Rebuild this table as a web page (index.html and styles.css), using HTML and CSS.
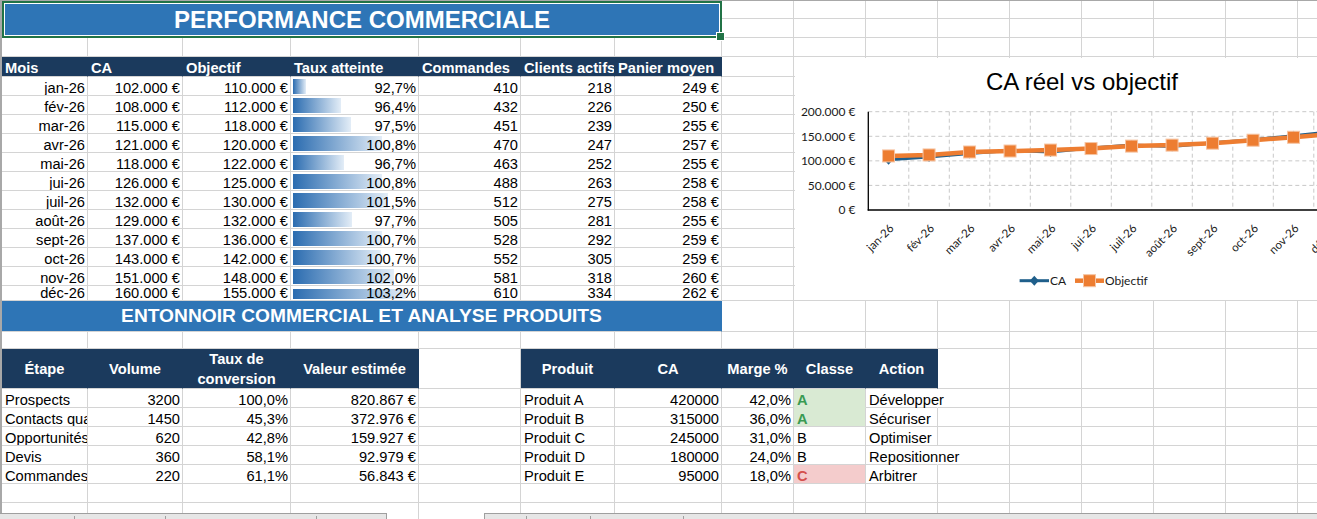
FILE: index.html
```html
<!DOCTYPE html>
<html lang="fr">
<head>
<meta charset="utf-8">
<title>Performance commerciale</title>
<link rel="stylesheet" href="styles.css">
</head>
<body>
<div class="sheet">
  <div class="grid">
    <div class="title">PERFORMANCE COMMERCIALE</div>
    <i class="rest"></i>
    <i class="rest"></i>
    <i></i><i></i><i></i><i></i><i></i><i></i><i></i><i class="rest"></i>

    <div class="hd">Mois</div><div class="hd">CA</div><div class="hd">Objectif</div><div class="hd">Taux atteinte</div><div class="hd">Commandes</div><div class="hd">Clients actifs</div><div class="hd">Panier moyen</div><i class="rest"></i>

    <div class="r">jan-26</div><div class="r">102.000 €</div><div class="r">110.000 €</div><div class="r bar" style="--w:13px">92,7%</div><div class="r">410</div><div class="r">218</div><div class="r">249 €</div><i class="rest"></i>
    <div class="r">fév-26</div><div class="r">108.000 €</div><div class="r">112.000 €</div><div class="r bar" style="--w:48px">96,4%</div><div class="r">432</div><div class="r">226</div><div class="r">250 €</div><i class="rest"></i>
    <div class="r">mar-26</div><div class="r">115.000 €</div><div class="r">118.000 €</div><div class="r bar" style="--w:58px">97,5%</div><div class="r">451</div><div class="r">239</div><div class="r">255 €</div><i class="rest"></i>
    <div class="r">avr-26</div><div class="r">121.000 €</div><div class="r">120.000 €</div><div class="r bar" style="--w:89px">100,8%</div><div class="r">470</div><div class="r">247</div><div class="r">257 €</div><i class="rest"></i>
    <div class="r">mai-26</div><div class="r">118.000 €</div><div class="r">122.000 €</div><div class="r bar" style="--w:51px">96,7%</div><div class="r">463</div><div class="r">252</div><div class="r">255 €</div><i class="rest"></i>
    <div class="r">jui-26</div><div class="r">126.000 €</div><div class="r">125.000 €</div><div class="r bar" style="--w:89px">100,8%</div><div class="r">488</div><div class="r">263</div><div class="r">258 €</div><i class="rest"></i>
    <div class="r">juil-26</div><div class="r">132.000 €</div><div class="r">130.000 €</div><div class="r bar" style="--w:95px">101,5%</div><div class="r">512</div><div class="r">275</div><div class="r">258 €</div><i class="rest"></i>
    <div class="r">août-26</div><div class="r">129.000 €</div><div class="r">132.000 €</div><div class="r bar" style="--w:59px">97,7%</div><div class="r">505</div><div class="r">281</div><div class="r">255 €</div><i class="rest"></i>
    <div class="r">sept-26</div><div class="r">137.000 €</div><div class="r">136.000 €</div><div class="r bar" style="--w:89px">100,7%</div><div class="r">528</div><div class="r">292</div><div class="r">259 €</div><i class="rest"></i>
    <div class="r">oct-26</div><div class="r">143.000 €</div><div class="r">142.000 €</div><div class="r bar" style="--w:88px">100,7%</div><div class="r">552</div><div class="r">305</div><div class="r">259 €</div><i class="rest"></i>
    <div class="r">nov-26</div><div class="r">151.000 €</div><div class="r">148.000 €</div><div class="r bar" style="--w:101px">102,0%</div><div class="r">581</div><div class="r">318</div><div class="r">260 €</div><i class="rest"></i>
    <div class="r s">déc-26</div><div class="r s">160.000 €</div><div class="r s">155.000 €</div><div class="r s bar" style="--w:113px">103,2%</div><div class="r s">610</div><div class="r s">334</div><div class="r s">262 €</div><i class="rest"></i>

    <div class="banner">ENTONNOIR COMMERCIAL ET ANALYSE PRODUITS</div><i class="rest"></i>
    <i></i><i></i><i></i><i></i><i></i><i></i><i></i><i class="rest"></i>

    <div class="fh">Étape</div><div class="fh">Volume</div><div class="fh">Taux de<br>conversion</div><div class="fh">Valeur estimée</div><i></i>
    <div class="fh">Produit</div><div class="fh">CA</div><div class="fh">Marge %</div><div class="fh">Classe</div><div class="fh">Action</div><i class="rest2"></i>

    <div>Prospects</div><div class="r">3200</div><div class="r">100,0%</div><div class="r">820.867 €</div><i></i>
    <div>Produit A</div><div class="r">420000</div><div class="r">42,0%</div><div class="ga top">A</div><div class="ov">Développer</div><i class="rest2"></i>

    <div>Contacts qualifiés</div><div class="r">1450</div><div class="r">45,3%</div><div class="r">372.976 €</div><i></i>
    <div>Produit B</div><div class="r">315000</div><div class="r">36,0%</div><div class="ga">A</div><div>Sécuriser</div><i class="rest2"></i>

    <div>Opportunités</div><div class="r">620</div><div class="r">42,8%</div><div class="r">159.927 €</div><i></i>
    <div>Produit C</div><div class="r">245000</div><div class="r">31,0%</div><div>B</div><div>Optimiser</div><i class="rest2"></i>

    <div>Devis</div><div class="r">360</div><div class="r">58,1%</div><div class="r">92.979 €</div><i></i>
    <div>Produit D</div><div class="r">180000</div><div class="r">24,0%</div><div>B</div><div class="ov">Repositionner</div><i class="rest2"></i>

    <div>Commandes</div><div class="r">220</div><div class="r">61,1%</div><div class="r">56.843 €</div><i></i>
    <div>Produit E</div><div class="r">95000</div><div class="r">18,0%</div><div class="rc">C</div><div>Arbitrer</div><i class="rest2"></i>

    <i></i><i></i><i></i><i></i><i></i><i></i><i></i><i class="rest"></i>
    <i></i><i></i><i></i><i></i><i></i><i></i><i></i><i class="rest"></i>
  </div>

  <div class="chart">
    <svg width="600" height="242" viewBox="1 1 600 242">
      <defs>
        <path id="dm" d="M0,-5 L4.5,0 L0,5 L-4.5,0 Z"/>
        <rect id="sq" x="-6" y="-6" width="12" height="12"/>
      </defs>
      <text class="ct" x="288" y="33" text-anchor="middle">CA réel vs objectif</text>
      <g class="gl">
        <line x1="74.3" y1="54.7" x2="600" y2="54.7"/>
        <line x1="74.3" y1="79.3" x2="600" y2="79.3"/>
        <line x1="74.3" y1="103.85" x2="600" y2="103.85"/>
        <line x1="74.3" y1="128.4" x2="600" y2="128.4"/>
        <line x1="114.8" y1="54.7" x2="114.8" y2="153"/>
        <line x1="155.3" y1="54.7" x2="155.3" y2="153"/>
        <line x1="195.8" y1="54.7" x2="195.8" y2="153"/>
        <line x1="236.3" y1="54.7" x2="236.3" y2="153"/>
        <line x1="276.8" y1="54.7" x2="276.8" y2="153"/>
        <line x1="317.3" y1="54.7" x2="317.3" y2="153"/>
        <line x1="357.8" y1="54.7" x2="357.8" y2="153"/>
        <line x1="398.3" y1="54.7" x2="398.3" y2="153"/>
        <line x1="438.8" y1="54.7" x2="438.8" y2="153"/>
        <line x1="479.3" y1="54.7" x2="479.3" y2="153"/>
        <line x1="519.8" y1="54.7" x2="519.8" y2="153"/>
        <line x1="560.3" y1="54.7" x2="560.3" y2="153"/>
      </g>
      <line class="ax" x1="74.3" y1="54.7" x2="74.3" y2="153.6"/>
      <line class="ax" x1="73.7" y1="153" x2="600" y2="153"/>
      <g class="lbl" text-anchor="end">
        <text x="61.5" y="58.9">200.000 €</text>
        <text x="61.5" y="83.5">150.000 €</text>
        <text x="61.5" y="108">100.000 €</text>
        <text x="61.5" y="132.6">50.000 €</text>
        <text x="61.5" y="157.2">0 €</text>
      </g>
      <polyline class="ca" points="94.55,102.87 135.05,99.92 175.55,96.48 216.05,93.53 256.55,95 297.05,91.07 337.55,88.12 378.05,89.6 418.55,85.66 459.05,82.72 499.55,78.78 540.05,74.36"/>
      <g class="cam">
        <use href="#dm" x="94.55" y="102.87"/><use href="#dm" x="135.05" y="99.92"/><use href="#dm" x="175.55" y="96.48"/><use href="#dm" x="216.05" y="93.53"/><use href="#dm" x="256.55" y="95"/><use href="#dm" x="297.05" y="91.07"/><use href="#dm" x="337.55" y="88.12"/><use href="#dm" x="378.05" y="89.6"/><use href="#dm" x="418.55" y="85.66"/><use href="#dm" x="459.05" y="82.72"/><use href="#dm" x="499.55" y="78.78"/><use href="#dm" x="540.05" y="74.36"/>
      </g>
      <polyline class="ob" points="94.55,98.93 135.05,97.95 175.55,95 216.05,94.02 256.55,93.04 297.05,91.56 337.55,89.1 378.05,88.12 418.55,86.16 459.05,83.21 499.55,80.26 540.05,76.82"/>
      <g class="obm">
        <use href="#sq" x="94.55" y="98.93"/><use href="#sq" x="135.05" y="97.95"/><use href="#sq" x="175.55" y="95"/><use href="#sq" x="216.05" y="94.02"/><use href="#sq" x="256.55" y="93.04"/><use href="#sq" x="297.05" y="91.56"/><use href="#sq" x="337.55" y="89.1"/><use href="#sq" x="378.05" y="88.12"/><use href="#sq" x="418.55" y="86.16"/><use href="#sq" x="459.05" y="83.21"/><use href="#sq" x="499.55" y="80.26"/><use href="#sq" x="540.05" y="76.82"/>
      </g>
      <g class="lbl xl" text-anchor="end">
        <text transform="translate(100.55 172) rotate(-45)">jan-26</text>
        <text transform="translate(141.05 172) rotate(-45)">fév-26</text>
        <text transform="translate(181.55 172) rotate(-45)">mar-26</text>
        <text transform="translate(222.05 172) rotate(-45)">avr-26</text>
        <text transform="translate(262.55 172) rotate(-45)">mai-26</text>
        <text transform="translate(303.05 172) rotate(-45)">jui-26</text>
        <text transform="translate(343.55 172) rotate(-45)">juil-26</text>
        <text transform="translate(384.05 172) rotate(-45)">août-26</text>
        <text transform="translate(424.55 172) rotate(-45)">sept-26</text>
        <text transform="translate(465.05 172) rotate(-45)">oct-26</text>
        <text transform="translate(505.55 172) rotate(-45)">nov-26</text>
        <text transform="translate(546.05 172) rotate(-45)">déc-26</text>
      </g>
      <line class="ca" x1="225.6" y1="223.7" x2="255" y2="223.7"/>
      <use class="cam" href="#dm" x="240.3" y="223.7"/>
      <text class="lbl" x="256" y="228">CA</text>
      <line class="ob" x1="281" y1="223.7" x2="310" y2="223.7"/>
      <use class="obm" href="#sq" x="295.5" y="223.7"/>
      <text class="lbl" x="311" y="228">Objectif</text>
    </svg>
  </div>

  <div class="tabs">
    <div class="seg left"></div>
    <div class="gap"></div>
    <div class="seg right"></div>
  </div>
</div>
</body>
</html>
```

FILE: styles.css
```css
* { box-sizing: border-box; }

html, body {
  margin: 0;
  padding: 0;
  background: #fff;
  overflow: hidden;
}

.sheet {
  position: relative;
  width: 1317px;
  height: 519px;
  overflow: hidden;
}

.grid {
  display: grid;
  width: 1370px;
  grid-template-columns: 86px 95px 108px 128px 102px 94px 107px repeat(9, 72px);
  grid-template-rows: 18px 19px 19px 20px repeat(11, 19px) 15px 31px 17px 40px repeat(7, 19px);
  border-top: 1px solid #a8a8a8;
  border-left: 2px solid #a8a8a8;
  font-family: "Liberation Sans", Arial, sans-serif;
  font-size: 14.67px;
  color: #000;
}

.grid > * {
  display: block;
  border-right: 1px solid #d4d4d4;
  border-bottom: 1px solid #d4d4d4;
  padding: 2px 2px 0 3px;
  line-height: 18px;
  white-space: nowrap;
  overflow: hidden;
  font-style: normal;
}

.grid > .rest,
.grid > .rest2 {
  border-right: 0;
  padding: 0;
  background: repeating-linear-gradient(90deg, transparent 0 71px, #d4d4d4 71px 72px);
}
.rest { grid-column: 8 / -1; }
.rest2 { grid-column: 11 / -1; }

.r { text-align: right; }

.grid > .s {
  padding-top: 0;
  line-height: 14px;
  overflow: visible;
}

.bar {
  background-image: linear-gradient(90deg, #2b6cb0 0%, #e3edf7 100%);
  background-repeat: no-repeat;
  background-position: 2px 2px;
  background-size: var(--w) 15px;
}
.bar.s {
  background-position: 2px 3px;
  background-size: var(--w) 10px;
}

.grid > .title {
  grid-column: span 7;
  grid-row: span 2;
  position: relative;
  z-index: 1;
  overflow: visible;
  display: flex;
  align-items: center;
  justify-content: center;
  padding: 0;
  background: #2e75b6;
  color: #fff;
  font-weight: bold;
  font-size: 24px;
  border: 2px solid #217346;
  box-shadow: inset 0 0 0 1px #fff;
}
.title::after {
  content: "";
  position: absolute;
  right: -5px;
  bottom: -5px;
  width: 7px;
  height: 7px;
  background: #217346;
  border: 1px solid #fff;
}

.grid > .hd {
  background: #1b3a5d;
  color: #fff;
  font-weight: bold;
  line-height: 19px;
  border-right-color: #1b3a5d;
}

.grid > .banner {
  grid-column: span 7;
  padding: 0;
  background: #2e75b6;
  border-right-color: #2e75b6;
  color: #fff;
  font-weight: bold;
  font-size: 19.2px;
  line-height: 30px;
  text-align: center;
}

.grid > .fh {
  display: flex;
  align-items: center;
  justify-content: center;
  text-align: center;
  white-space: normal;
  line-height: 20px;
  background: #1b3a5d;
  border-right-color: #1b3a5d;
  color: #fff;
  font-weight: bold;
  padding: 1px 0 0;
}

.grid > .ga {
  background: #d9ead3;
  color: #3a9a52;
  font-weight: bold;
}
.grid > .ga.top { border-bottom-color: #d9ead3; }

.grid > .rc {
  background: #f4cccc;
  color: #d4504c;
  font-weight: bold;
}

.grid > .ov {
  overflow: visible;
  border-right-color: transparent;
}

/* Chart */
.chart {
  position: absolute;
  left: 795px;
  top: 58px;
  width: 600px;
  height: 242px;
  background: #fff;
}
.chart svg { display: block; }

.ct {
  font-family: "Liberation Sans", Arial, sans-serif;
  font-size: 24px;
  fill: #000;
}
.gl line {
  stroke: #c8c8c8;
  stroke-width: 1;
  stroke-dasharray: 4 3;
}
.ax {
  stroke: #000;
  stroke-width: 1.3;
}
.lbl {
  font-family: Lato, "Open Sans", sans-serif;
  font-size: 12px;
  fill: #1a1a1a;
}
.xl { font-size: 11.5px; }
.ca {
  fill: none;
  stroke: #1f5f8b;
  stroke-width: 3;
  stroke-linejoin: round;
}
.cam { fill: #1f5f8b; }
.ob {
  fill: none;
  stroke: #ed7d31;
  stroke-width: 4.5;
  stroke-linejoin: round;
}
.obm {
  fill: #ed7d31;
  stroke: #f6c4a2;
  stroke-width: 1;
}

/* Sheet tab strip */
.tabs {
  position: absolute;
  left: 0;
  right: 0;
  bottom: 0;
  height: 6px;
  display: flex;
}
.seg {
  background-color: #e6e6e6;
  border-top: 1px solid #9f9f9f;
  background-image: linear-gradient(#9f9f9f, #9f9f9f), linear-gradient(#9f9f9f, #9f9f9f), linear-gradient(#9f9f9f, #9f9f9f);
  background-repeat: no-repeat;
  background-size: 1px 4px;
}
.seg.left {
  width: 387px;
  border-right: 1px solid #9f9f9f;
  background-position: 74px 2px, 165px 2px, 316px 2px;
}
.gap { width: 97px; }
.seg.right {
  flex: 1;
  border-left: 1px solid #9f9f9f;
  background-position: 41px 2px, 105px 2px, 198px 2px;
}
```
